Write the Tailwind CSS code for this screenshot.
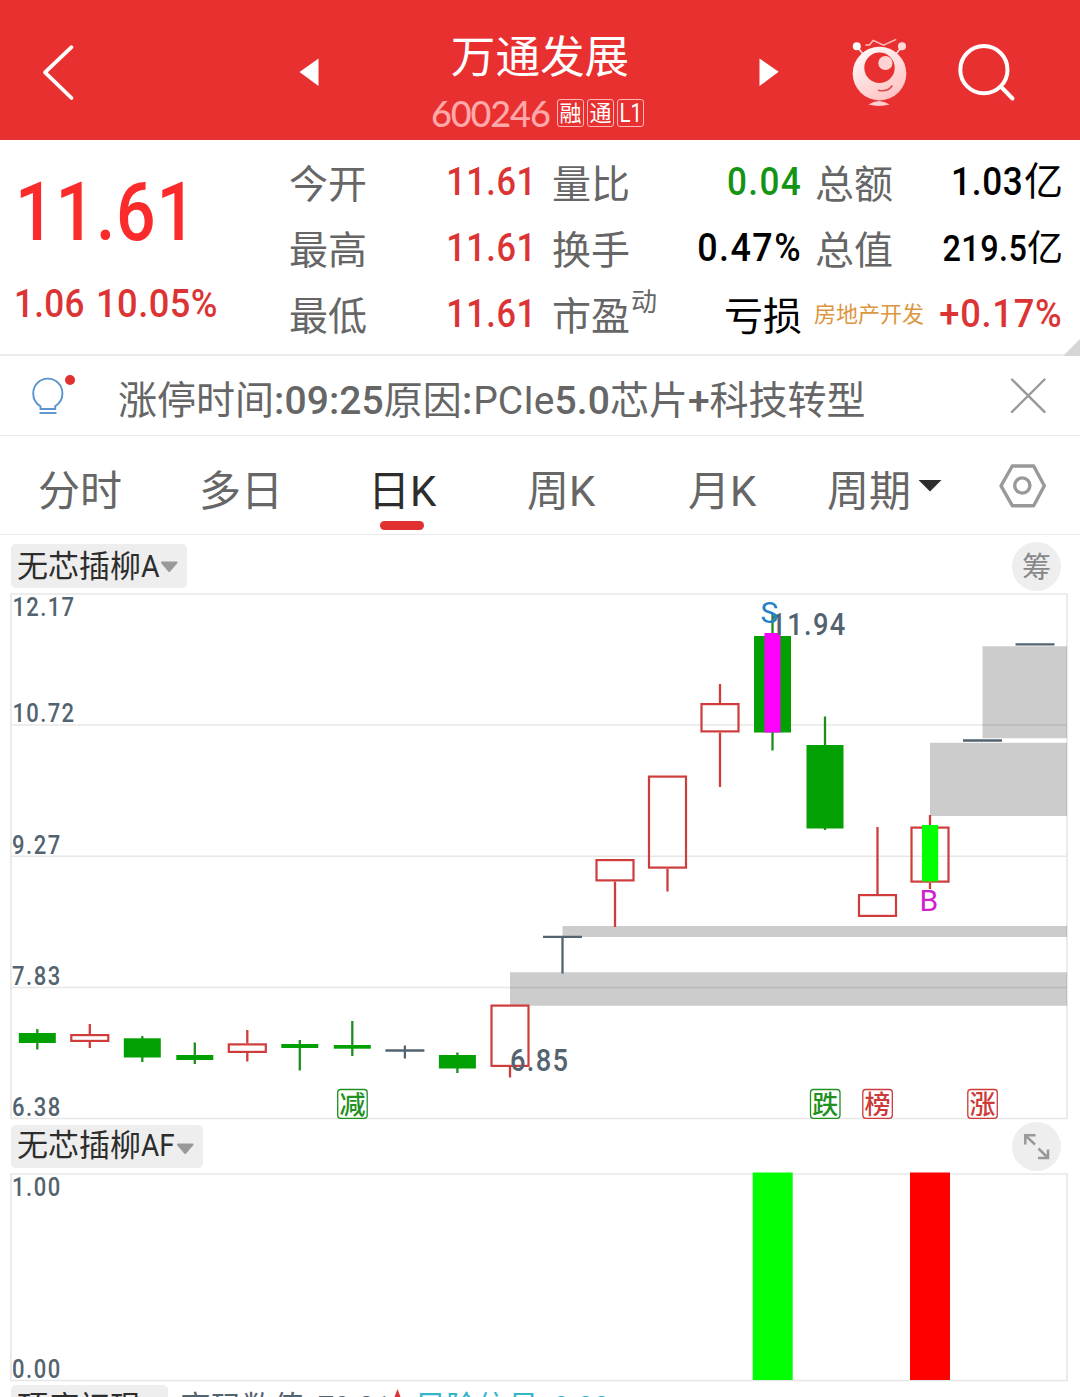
<!DOCTYPE html>
<html lang="zh-CN">
<head>
<meta charset="utf-8">
<title>万通发展 600246</title>
<script src="https://cdn.jsdelivr.net/npm/@tailwindcss/browser@4"></script>
</head>
<body class="w-[1080px] h-[1397px] overflow-hidden bg-white font-['Roboto','Noto_Sans_CJK_SC',sans-serif] text-[#666]">
<div class="flex h-[1397px] w-[1080px] flex-col overflow-hidden">

  <!-- Title bar -->
  <header class="flex h-[140px] shrink-0 bg-[#e93030] text-white">
    <svg class="w-[400px] shrink-0" height="140" viewBox="0 0 400 140" fill="none">
      <path d="M71.5 47.2 45 72.3 71.5 98" stroke="#fff" stroke-width="3.8" stroke-linecap="round" stroke-linejoin="round"/>
      <path d="M299.5 72 318.5 58.5V86Z" fill="#fff"/>
    </svg>
    <div class="flex w-[280px] shrink-0 flex-col items-center pt-[31px]">
      <h1 class="text-[44.6px] leading-[54px] whitespace-nowrap">万通发展</h1>
      <div class="mt-[10px] -ml-[4px] flex h-[36px] w-[214px] items-center text-[22px] leading-none">
        <span class="w-[126px] shrink-0 font-['Lato',sans-serif] text-[36px] font-medium tracking-[-1.1px] whitespace-nowrap text-[#ffa9a9]">600246</span>
        <span class="flex h-[28px] w-[27px] shrink-0 items-center justify-center rounded-[3px] border border-[#ffb5b5] pt-[2px]">融</span>
        <span class="ml-[3px] flex h-[28px] w-[27px] shrink-0 items-center justify-center rounded-[3px] border border-[#ffb5b5] pt-[2px]">通</span>
        <span class="ml-[3px] flex h-[28px] w-[27px] shrink-0 items-center justify-center rounded-[3px] border border-[#ffb5b5] text-[25px]"><span class="scale-x-[0.82]">L1</span></span>
      </div>
    </div>
    <svg class="w-[400px] shrink-0" height="140" viewBox="680 0 400 140" fill="none">
      <defs><linearGradient id="m" x1="0" y1="0" x2=".6" y2="1"><stop offset="0" stop-color="#fff"/><stop offset="1" stop-color="#ffc4c4"/></linearGradient></defs>
      <path d="M759.5 58.5 778.7 71.8 759.5 86Z" fill="#fff"/>
      <path d="M857 46.5 863 54M902 46.5 895.5 54.5" stroke="#ffd9d9" stroke-width="1.8"/>
      <circle cx="856.8" cy="46.3" r="4" fill="#fff"/><circle cx="902" cy="46.3" r="4" fill="#ffdada"/>
      <path d="M865.4 44.9h4l3.8-4.5 10.3 4.8 12.7-5.8" stroke="#ffc0c0" stroke-width="1.5"/>
      <circle cx="879.5" cy="73.6" r="26.8" fill="url(#m)"/>
      <circle cx="879.5" cy="67.8" r="15.2" fill="#e93030"/>
      <circle cx="885.4" cy="63" r="7.1" fill="#ffd3d3"/>
      <path d="M878 90.2Q888 92.5 892.3 85.5" stroke="#e04848" stroke-width="1.6"/>
      <path d="M868.5 104.6Q879 97.5 889.5 104.6Q879 107.5 868.5 104.6Z" fill="#ffcdcd"/>
      <circle cx="983.9" cy="69.7" r="23.6" stroke="#fff" stroke-width="4"/>
      <path d="M1001.2 87 1012.5 98.5" stroke="#fff" stroke-width="4" stroke-linecap="round"/>
    </svg>
  </header>

  <!-- Quote summary -->
  <section class="relative flex h-[216px] shrink-0 border-b-2 border-[#ececec]">
    <div class="w-[289px] shrink-0 font-medium text-[#fb2b2b]">
      <div class="mt-[26px] ml-[15px] h-[94px] w-[210px] origin-left scale-x-[0.86] text-[81px] leading-[94px] tracking-[1px]">11.61</div>
      <div class="mt-[21px] ml-[14px] flex h-[46px] text-[39px] leading-[46px] text-[#dc3434]"><span class="w-[82px] origin-left scale-x-[0.9] tracking-[0.3px]">1.06</span><span class="origin-left scale-x-[0.93] tracking-[0.5px]">10.05%</span></div>
    </div>
    <div class="grid w-[250px] shrink-0 auto-rows-[66px] grid-cols-[1fr_auto] pt-[12px] pr-[3px] text-[39px] leading-[66px]">
      <span>今开</span><b class="origin-right -translate-y-[3px] scale-x-[0.88] font-medium tracking-[0.6px] text-[#dc3434]">11.61</b>
      <span>最高</span><b class="origin-right -translate-y-[3px] scale-x-[0.88] font-medium tracking-[0.6px] text-[#dc3434]">11.61</b>
      <span>最低</span><b class="origin-right -translate-y-[3px] scale-x-[0.88] font-medium tracking-[0.6px] text-[#dc3434]">11.61</b>
    </div>
    <div class="ml-[13px] grid w-[250px] shrink-0 auto-rows-[66px] grid-cols-[1fr_auto] pt-[12px] text-right text-[39px] leading-[66px]">
      <span class="text-left">量比</span><b class="origin-right -translate-y-[3px] scale-x-[0.9] font-medium tracking-[1.5px] text-[#149414]">0.04</b>
      <span class="text-left">换手</span><b class="origin-right -translate-y-[3px] scale-x-[0.92] font-medium tracking-[1.6px] text-black">0.47%</b>
      <span class="flex text-left">市盈<i class="-mt-[15px] ml-px text-[26px] not-italic">动</i></span><span class="text-black">亏损</span>
    </div>
    <div class="ml-[13px] grid w-[248px] shrink-0 auto-rows-[66px] pt-[12px] text-[39px] leading-[66px]">
      <div class="flex justify-between"><span>总额</span><span class="flex -translate-y-[3px] whitespace-nowrap text-black"><b class="origin-right scale-x-[0.9] font-medium tracking-[0.8px]">1.03</b>亿</span></div>
      <div class="flex justify-between"><span>总值</span><span class="flex -translate-y-[2px] text-[36px] whitespace-nowrap text-black"><b class="origin-right scale-x-[0.9] font-medium tracking-[0.5px]">219.5</b>亿</span></div>
      <div class="flex justify-between whitespace-nowrap"><span class="-ml-px -translate-y-[2px] text-[22px] text-[#dd9640]">房地产开发</span><b class="-ml-[20px] origin-right -translate-y-[3px] scale-x-[0.93] font-medium tracking-[0.8px] text-[#dc3434]">+0.17%</b></div>
    </div>
    <svg class="absolute right-0 -bottom-[2px]" width="17" height="17" viewBox="0 0 18 18"><path d="M18 0V18H0Z" fill="#d6d6d6"/></svg>
  </section>

  <!-- Notice -->
  <section class="flex h-[80px] shrink-0 items-center border-b border-[#ebebeb]">
    <svg class="w-[118px] shrink-0" height="79" viewBox="0 356 118 79" fill="none">
      <path d="M40.500 409V406.200C36 403.500 33.200 399 33.200 393.400A14.600 14.800 0 0 1 62.400 393.400C62.400 399 59.500 403.500 55.200 406.200V409Z" stroke="#5b93cf" stroke-width="1.900"/>
      <path d="M39.500 413h17" stroke="#5b93cf" stroke-width="1.900"/>
      <circle cx="70" cy="380" r="5" fill="#e03030"/>
    </svg>
    <p class="w-[760px] shrink-0 pt-[11px] text-[39px] leading-[60px] whitespace-nowrap">涨停时间<b class="font-medium tracking-[0.1px]">:09:25</b>原因<b class="font-medium tracking-[1px]">:</b>PCIe<b class="font-medium tracking-[0.1px]">5.0</b>芯片<b class="font-medium">+</b>科技转型</p>
    <svg class="w-[202px] shrink-0" height="79" viewBox="878 356 202 79" fill="none"><path d="M1012 379.500 1044.500 411.800M1044.500 379.500 1012 411.800" stroke="#999" stroke-width="2.400" stroke-linecap="round"/></svg>
  </section>

  <!-- Period tabs -->
  <nav class="flex h-[99px] shrink-0 border-b border-[#ebebeb] text-[42px] leading-[111px] whitespace-nowrap">
    <span class="w-[161px] shrink-0 pl-[38px]">分时</span>
    <span class="w-[161px] shrink-0 pl-[38px]">多日</span>
    <span class="relative w-[161px] shrink-0 pl-[46px] text-[#2d2d2d]">日K<i class="absolute top-[85px] left-[58px] h-[9px] w-[44px] rounded-full bg-[#e03030]"></i></span>
    <span class="w-[161px] shrink-0 pl-[44px]">周K</span>
    <span class="w-[161px] shrink-0 pl-[44px]">月K</span>
    <span class="w-[105px] shrink-0 pl-[22px]">周期</span>
    <svg class="w-[170px] shrink-0" height="98" viewBox="910 436 170 98" fill="none">
      <path d="M918.500 480h23L930 491.500Z" fill="#2d2d2d"/>
      <path d="M1012.300 466h21.400L1044.300 485.800 1033.700 505.700H1012.300L1001 485.800Z" stroke="#999" stroke-width="3.400" stroke-linejoin="round"/>
      <circle cx="1022.300" cy="485.500" r="7.600" stroke="#999" stroke-width="3.400"/>
    </svg>
  </nav>

  <!-- Main chart heading -->
  <div class="flex h-[57px] shrink-0 items-start justify-between pt-[7px] pr-[19px] pl-[11px]">
    <div class="mt-[2px] flex h-[44px] w-[176px] rounded-[5px] bg-[#eee] pl-[6px] text-[31px] leading-[45px] text-[#2d2d2d]">无芯插柳<span class="w-[19px] origin-left scale-x-[0.92]">A</span><svg class="mt-[17px]" width="18" height="13" viewBox="0 0 18 13"><path d="M2 1.500H16.500L9.200 10Z" fill="#999" stroke="#999" stroke-width="2" stroke-linejoin="round"/></svg></div>
    <div class="flex size-[49px] items-center justify-center rounded-full bg-[#eee] pt-[4px] text-[29px] leading-none text-[#888]">筹</div>
  </div>

  <!-- Candlestick chart -->
  <svg class="block shrink-0" width="1080" height="528" viewBox="0 592 1080 528">
    <g fill="none" stroke="#e7e7e7" stroke-width="1.6">
      <path d="M11 594H1067V1118.500H11Z"/><path d="M11 725H1067M11 856.300H1067M11 987.500H1067"/>
    </g>
    <g fill="#000" fill-opacity=".2">
      <path d="M510 972.300H1067V1005.800H510ZM562.500 926H1067V937H562.500ZM930 742.800H1067V816H930ZM982.500 646.200H1067V738.200H982.500Z"/>
    </g>
    <g id="candles"></g>
    <path d="M764.500 633h16v99.500h-16Z" fill="#f0f"/>
    <path d="M922 825h16.200v56.500H922Z" fill="#0f0"/>
    <!-- condensed numerals: the group is scaled to 88% width -->
    <g fill="#53636f" font-family="Roboto" font-size="25" font-weight="500" transform="scale(.88 1)">
      <text x="14.200" y="616" textLength="70">12.17</text><text x="14.200" y="722" textLength="70">10.72</text>
      <text x="13.600" y="854" textLength="55">9.27</text><text x="13.600" y="985" textLength="55">7.83</text><text x="13.600" y="1116" textLength="55">6.38</text>
      <text x="875.500" y="635" font-size="31" textLength="85">11.94</text><text x="579.500" y="1071.500" font-size="31" textLength="66">6.85</text>
    </g>
    <g font-family="Roboto" font-size="30"><text x="760.500" y="622.500" fill="#2080c8" textLength="18">S</text><text x="919.500" y="910.500" fill="#d020d0">B</text></g>
    <g font-family="Noto Sans CJK SC" font-size="26" text-anchor="middle" font-weight="500" stroke-width="1.300">
      <g fill="#1f911f"><rect x="337.700" y="1089.500" width="29.500" height="28.800" rx="3" fill="#fff" stroke="#1f911f"/><text x="352.400" y="1113.500">减</text>
      <rect x="810.500" y="1089.500" width="29.500" height="28.800" rx="3" fill="#fff" stroke="#1f911f"/><text x="825.200" y="1113.500">跌</text></g>
      <g fill="#cc3a3a"><rect x="862.800" y="1089.500" width="29.500" height="28.800" rx="3" fill="#fff" stroke="#cc3a3a"/><text x="877.500" y="1113.500">榜</text>
      <rect x="967.800" y="1089.500" width="29.500" height="28.800" rx="3" fill="#fff" stroke="#cc3a3a"/><text x="982.500" y="1113.500">涨</text></g>
    </g>
  </svg>

  <!-- Indicator heading -->
  <div class="flex h-[52px] shrink-0 items-start justify-between pt-[2px] pr-[19px] pl-[11px]">
    <div class="mt-[3px] flex h-[43px] w-[192px] rounded-[5px] bg-[#eee] pl-[6px] text-[31px] leading-[42px] text-[#2d2d2d]">无芯插柳<span class="w-[35px] origin-left scale-x-[0.9]">AF</span><svg class="mt-[18px]" width="18" height="13" viewBox="0 0 18 13"><path d="M2 1.500H16.500L9.200 10Z" fill="#999" stroke="#999" stroke-width="2" stroke-linejoin="round"/></svg></div>
    <svg class="size-[49px] rounded-full bg-[#eee]" viewBox="1012 1122 49 49" fill="none" stroke="#999" stroke-width="2.500"><path d="M1025.300 1144.500V1135.300H1035.500M1025.300 1135.300 1035 1144.500M1048 1149.500V1158H1038M1038.500 1148.500 1048 1158"/></svg>
  </div>

  <!-- Indicator bars -->
  <svg class="block shrink-0" width="1080" height="210" viewBox="0 1172 1080 210">
    <path d="M11 1174H1067V1380.500H11Z" fill="none" stroke="#e7e7e7" stroke-width="1.600"/>
    <path d="M752.700 1172.500h40V1380h-40Z" fill="#0f0"/><path d="M910 1172.500h40V1380h-40Z" fill="red"/>
    <g fill="#53636f" font-family="Roboto" font-size="25" font-weight="500" transform="scale(.88 1)"><text x="13.600" y="1196" textLength="55">1.00</text><text x="13.600" y="1378" textLength="55">0.00</text></g>
  </svg>

  <!-- Next indicator, cut by the screen edge -->
  <div class="flex h-[15px] shrink-0 overflow-hidden pt-[3px] pl-[11px] text-[31px] leading-[45px] whitespace-nowrap">
    <span class="h-[43px] w-[157px] shrink-0 rounded-[5px] bg-[#eee] pl-[6px] text-[#2d2d2d]">顶底初现</span>
    <span class="flex w-[222px] shrink-0 pl-[12px] text-[#53636f]">密码数值:<b class="ml-[6px] origin-left scale-x-[0.92] font-medium">79.21</b></span>
    <svg class="w-[16px] shrink-0" height="20" viewBox="0 0 16 20"><path d="M7.500 4 12 16H3Z" fill="#e03030"/></svg>
    <span class="flex pl-[9px] text-[#35b5c8]">风险信号:<b class="ml-[6px] origin-left scale-x-[0.92] font-medium">0.00</b></span>
  </div>
</div>
<script>
  // [type, centre x, body top, body bottom, wick top, wick bottom]
  const rows = [
    ['g',37.3,1033,1043,1029,1049.5],['r',89.8,1034,1042,1024,1048],['g',142.3,1038.3,1057.5,1036,1062],
    ['g',194.8,1055,1060,1042.5,1064],['r',247.3,1043.3,1053,1030,1061.5],['g',299.8,1044,1048,1040,1070.5],
    ['g',352.3,1045,1048.7,1021,1056],['n',404.9,1050.5,1050.5,1045.5,1058.5],['g',457.4,1055,1068.5,1052.5,1073],
    ['r',510,1004.5,1067,1004.5,1077.5],['n',562.5,936.8,936.8,936.8,973.5],['r',615,859,881.5,859,927],
    ['r',667.5,775.5,868.7,775.5,891.5],['r',720,703,732.5,684,787],['g',772.5,636,732.5,613,750.5],
    ['g',825,745,828.5,716.5,830],['r',877.5,894,917,827,917],['r',930,826.5,882.7,815,889],
    ['n',982.5,740.5,740.5,740.5,740.5],['n',1035,644.3,644.3,644.3,644.3]];
  const color = {g:'#1f8c1f', r:'#cf3c3c', n:'#53636f'};
  document.getElementById('candles').innerHTML = rows.map(([t,x,a,b,h,l]) => {
    const wick = t === 'r' ? `M${x} ${h}V${a}M${x} ${b}V${l}` : `M${x} ${h}V${l}`;
    const body = t === 'g' ? `<rect x="${x-18.5}" y="${a}" width="37" height="${b-a}" fill="#02a002"/>`
      : t === 'r' ? `<rect x="${x-18.5}" y="${a+1.1}" width="37" height="${b-a-2.2}" fill="none" stroke="${color.r}" stroke-width="2.2"/>`
      : `<path d="M${x-19.5} ${a}h39" stroke="${color.n}" stroke-width="2.3"/>`;
    return `<path d="${wick}" stroke="${color[t]}" stroke-width="2.3" fill="none"/>${body}`;
  }).join('');
</script>
</body>
</html>
